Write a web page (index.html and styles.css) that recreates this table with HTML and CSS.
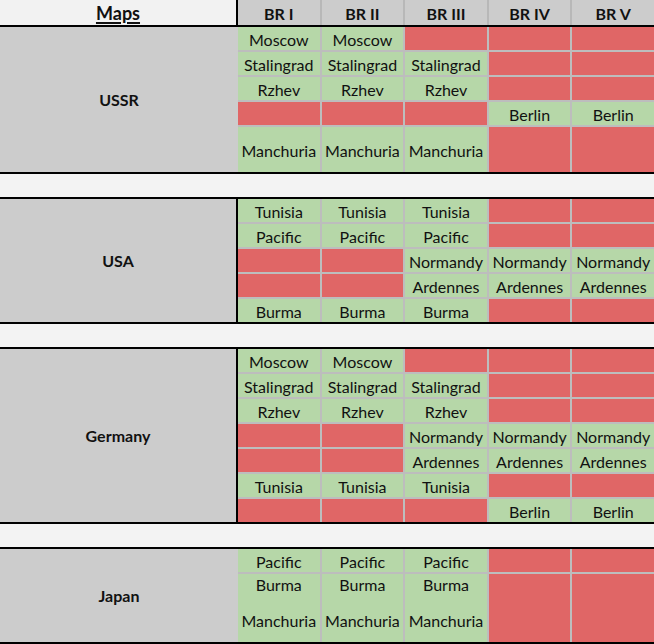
FILE: index.html
```html
<!DOCTYPE html>
<html>
<head>
<meta charset="utf-8">
<link rel="stylesheet" href="styles.css">
</head>
<body>
<div class="sheet">
  <div class="head">
    <div class="maps-head"><span>Maps</span></div>
    <div class="br-heads">
      <div class="br">BR I</div><div class="br">BR II</div><div class="br">BR III</div><div class="br">BR IV</div><div class="br">BR V</div>
    </div>
  </div>

  <div class="section">
    <div class="label">USSR</div>
    <div class="cells">
      <div class="cell g">Moscow</div><div class="cell g">Moscow</div><div class="cell r"></div><div class="cell r"></div><div class="cell r"></div>
      <div class="cell g">Stalingrad</div><div class="cell g">Stalingrad</div><div class="cell g">Stalingrad</div><div class="cell r"></div><div class="cell r"></div>
      <div class="cell g">Rzhev</div><div class="cell g">Rzhev</div><div class="cell g">Rzhev</div><div class="cell r"></div><div class="cell r"></div>
      <div class="cell r"></div><div class="cell r"></div><div class="cell r"></div><div class="cell g">Berlin</div><div class="cell g">Berlin</div>
      <div class="cell g tall">Manchuria</div><div class="cell g tall">Manchuria</div><div class="cell g tall">Manchuria</div><div class="cell r tall"></div><div class="cell r tall"></div>
    </div>
  </div>
  <div class="spacer"></div>

  <div class="section">
    <div class="label edged">USA</div>
    <div class="cells">
      <div class="cell g">Tunisia</div><div class="cell g">Tunisia</div><div class="cell g">Tunisia</div><div class="cell r"></div><div class="cell r"></div>
      <div class="cell g">Pacific</div><div class="cell g">Pacific</div><div class="cell g">Pacific</div><div class="cell r"></div><div class="cell r"></div>
      <div class="cell r"></div><div class="cell r"></div><div class="cell g">Normandy</div><div class="cell g">Normandy</div><div class="cell g">Normandy</div>
      <div class="cell r"></div><div class="cell r"></div><div class="cell g">Ardennes</div><div class="cell g">Ardennes</div><div class="cell g">Ardennes</div>
      <div class="cell g">Burma</div><div class="cell g">Burma</div><div class="cell g">Burma</div><div class="cell r"></div><div class="cell r"></div>
    </div>
  </div>
  <div class="spacer"></div>

  <div class="section">
    <div class="label edged">Germany</div>
    <div class="cells">
      <div class="cell g">Moscow</div><div class="cell g">Moscow</div><div class="cell r"></div><div class="cell r"></div><div class="cell r"></div>
      <div class="cell g">Stalingrad</div><div class="cell g">Stalingrad</div><div class="cell g">Stalingrad</div><div class="cell r"></div><div class="cell r"></div>
      <div class="cell g">Rzhev</div><div class="cell g">Rzhev</div><div class="cell g">Rzhev</div><div class="cell r"></div><div class="cell r"></div>
      <div class="cell r"></div><div class="cell r"></div><div class="cell g">Normandy</div><div class="cell g">Normandy</div><div class="cell g">Normandy</div>
      <div class="cell r"></div><div class="cell r"></div><div class="cell g">Ardennes</div><div class="cell g">Ardennes</div><div class="cell g">Ardennes</div>
      <div class="cell g">Tunisia</div><div class="cell g">Tunisia</div><div class="cell g">Tunisia</div><div class="cell r"></div><div class="cell r"></div>
      <div class="cell r"></div><div class="cell r"></div><div class="cell r"></div><div class="cell g">Berlin</div><div class="cell g">Berlin</div>
    </div>
  </div>
  <div class="spacer"></div>

  <div class="section last">
    <div class="label">Japan</div>
    <div class="cells">
      <div class="cell g">Pacific</div><div class="cell g">Pacific</div><div class="cell g">Pacific</div><div class="cell r"></div><div class="cell r"></div>
      <div class="cell g multi">Burma<br><br>Manchuria</div><div class="cell g multi">Burma<br><br>Manchuria</div><div class="cell g multi">Burma<br><br>Manchuria</div><div class="cell r multi"></div><div class="cell r multi"></div>
    </div>
  </div>
</div>
</body>
</html>
```

FILE: styles.css
```css
* { box-sizing: border-box; }
html, body { margin: 0; padding: 0; background: #ffffff; }
body {
  font-family: Lato, "Open Sans", "Liberation Sans", sans-serif;
  font-size: 16px;
  color: #111111;
}
.sheet { width: 654px; }

.head {
  display: flex;
  height: 27px;
  border-bottom: 2px solid #000;
}
.maps-head {
  width: 238px;
  flex: none;
  background: #f2f2f2;
  border-right: 2px solid #000;
  display: flex;
  align-items: center;
  justify-content: center;
  font-weight: bold;
  font-size: 18px;
  padding-top: 1px;
}
.maps-head span { text-decoration: underline; text-underline-offset: 2px; text-decoration-thickness: 2px; }
.br-heads {
  flex: 1;
  display: grid;
  grid-template-columns: repeat(5, 1fr);
  gap: 2px;
  background: #b8b8b8;
}
.br {
  background: #cccccc;
  display: flex;
  align-items: center;
  justify-content: center;
  font-weight: bold;
  padding-top: 2px;
}

.section { display: flex; }
.section.last { border-bottom: 2px solid #000; }
.label {
  width: 238px;
  flex: none;
  background: #cccccc;
  display: flex;
  align-items: center;
  justify-content: center;
  font-weight: bold;
  padding-top: 0;
}
.label.edged { border-right: 2px solid #000; }

.cells {
  flex: 1;
  display: grid;
  grid-template-columns: repeat(5, 1fr);
  gap: 2px;
  background: #bdbdbd;
}
.cell {
  height: 23px;
  display: flex;
  align-items: center;
  justify-content: center;
  padding-top: 3px;
  line-height: 18px;
  white-space: nowrap;
}
.cell.tall { height: 45px; }
.cell.multi {
  height: 68px;
  align-items: flex-start;
  text-align: center;
  padding-top: 2px;
}
.g { background: #b6d7a8; }
.r { background: #e06666; }

.spacer {
  height: 27px;
  background: #f3f3f3;
  border-top: 2px solid #000;
  border-bottom: 2px solid #000;
}
```
